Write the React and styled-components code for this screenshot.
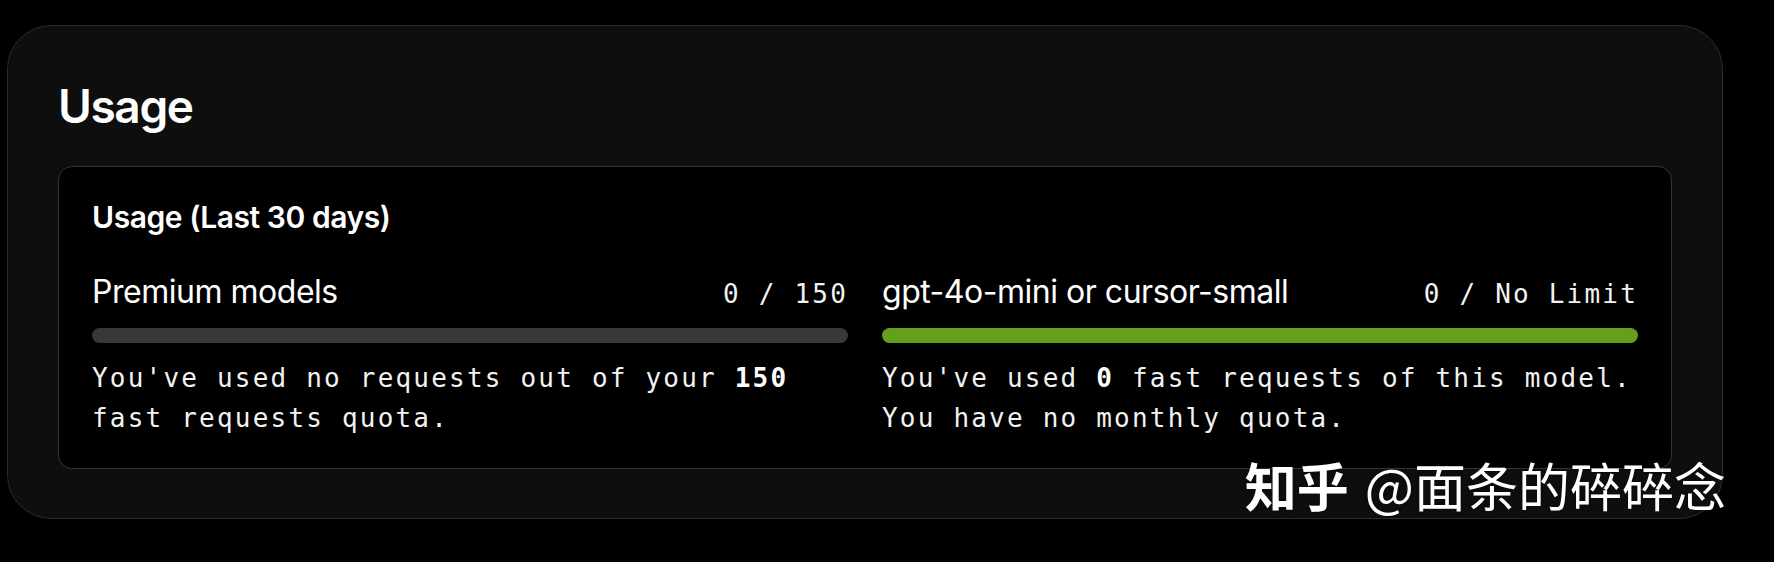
import React from "react";
import styled, { createGlobalStyle } from "styled-components";

const GlobalStyle = createGlobalStyle`
  html, body {
    margin: 0;
    padding: 0;
    background: #000;
  }
  body {
    font-family: Inter, "Noto Sans", sans-serif;
    color: #fff;
  }
`;

const Page = styled.div`
  position: relative;
  width: 1774px;
  height: 562px;
  box-sizing: border-box;
  padding: 25px 51px 0 7px;
  background: #000;
  overflow: hidden;
`;

const Panel = styled.section`
  background: #0e0e0e;
  border: 1px solid #2c2c2c;
  border-radius: 44px;
  padding: 52px 50px 49px 50px;
`;

const Heading = styled.h1`
  margin: 0 0 32px 0;
  font-size: 46px;
  line-height: 56px;
  font-weight: 600;
  letter-spacing: -0.03em;
`;

const Card = styled.div`
  background: #000;
  border: 1px solid #353535;
  border-radius: 14px;
  padding: 33px 33px 30px 33px;
`;

const CardTitle = styled.h2`
  margin: 0 0 40px 0;
  font-size: 30px;
  line-height: 34px;
  font-weight: 600;
  letter-spacing: -0.015em;
`;

const Columns = styled.div`
  display: grid;
  grid-template-columns: minmax(0, 1fr) minmax(0, 1fr);
  column-gap: 34px;
`;

const Column = styled.div`
  display: flex;
  flex-direction: column;
  min-width: 0;
`;

const Header = styled.div`
  display: flex;
  justify-content: space-between;
  align-items: baseline;
`;

const Label = styled.span`
  font-size: 32px;
  line-height: 36px;
  font-weight: 400;
  letter-spacing: -0.015em;
`;

const Mono = styled.span`
  font-family: "DejaVu Sans Mono", "Liberation Mono", monospace;
  font-size: 26px;
  letter-spacing: 2.2px;
  color: #f2f2f2;
`;

const Track = styled.div`
  margin-top: 18px;
  height: 15px;
  border-radius: 8px;
  background: ${(p) => (p.$active ? "#64a01e" : "#383838")};
`;

const Note = styled.div`
  margin-top: 15px;
  font-family: "DejaVu Sans Mono", "Liberation Mono", monospace;
  font-size: 26px;
  line-height: 40px;
  letter-spacing: 2.2px;
  color: #f2f2f2;

  b {
    font-weight: 700;
    color: #fff;
  }
`;

const NoteLine = styled.div`
  white-space: nowrap;
`;

const Watermark = styled.div`
  position: absolute;
  right: 48px;
  top: 454px;
  font-family: "Noto Sans CJK SC", sans-serif;
  font-size: 52px;
  line-height: 62px;
  color: #fff;
  white-space: nowrap;
  text-shadow: 0 0 3px rgba(0, 0, 0, 0.6);

  strong {
    font-weight: 700;
    margin-right: 16px;
  }
`;

const models = [
  {
    name: "Premium models",
    count: "0 / 150",
    active: false,
    lines: [
      <>
        You've used no requests out of your <b>150</b>
      </>,
      <>fast requests quota.</>,
    ],
  },
  {
    name: "gpt-4o-mini or cursor-small",
    count: "0 / No Limit",
    active: true,
    lines: [
      <>
        You've used <b>0</b> fast requests of this model.
      </>,
      <>You have no monthly quota.</>,
    ],
  },
];

export default function App() {
  return (
    <Page>
      <GlobalStyle />
      <Panel>
        <Heading>Usage</Heading>
        <Card>
          <CardTitle>Usage (Last 30 days)</CardTitle>
          <Columns>
            {models.map((m) => (
              <Column key={m.name}>
                <Header>
                  <Label>{m.name}</Label>
                  <Mono>{m.count}</Mono>
                </Header>
                <Track $active={m.active} />
                <Note>
                  {m.lines.map((line, i) => (
                    <NoteLine key={i}>{line}</NoteLine>
                  ))}
                </Note>
              </Column>
            ))}
          </Columns>
        </Card>
      </Panel>
      <Watermark>
        <strong>知乎</strong>@面条的碎碎念
      </Watermark>
    </Page>
  );
}
